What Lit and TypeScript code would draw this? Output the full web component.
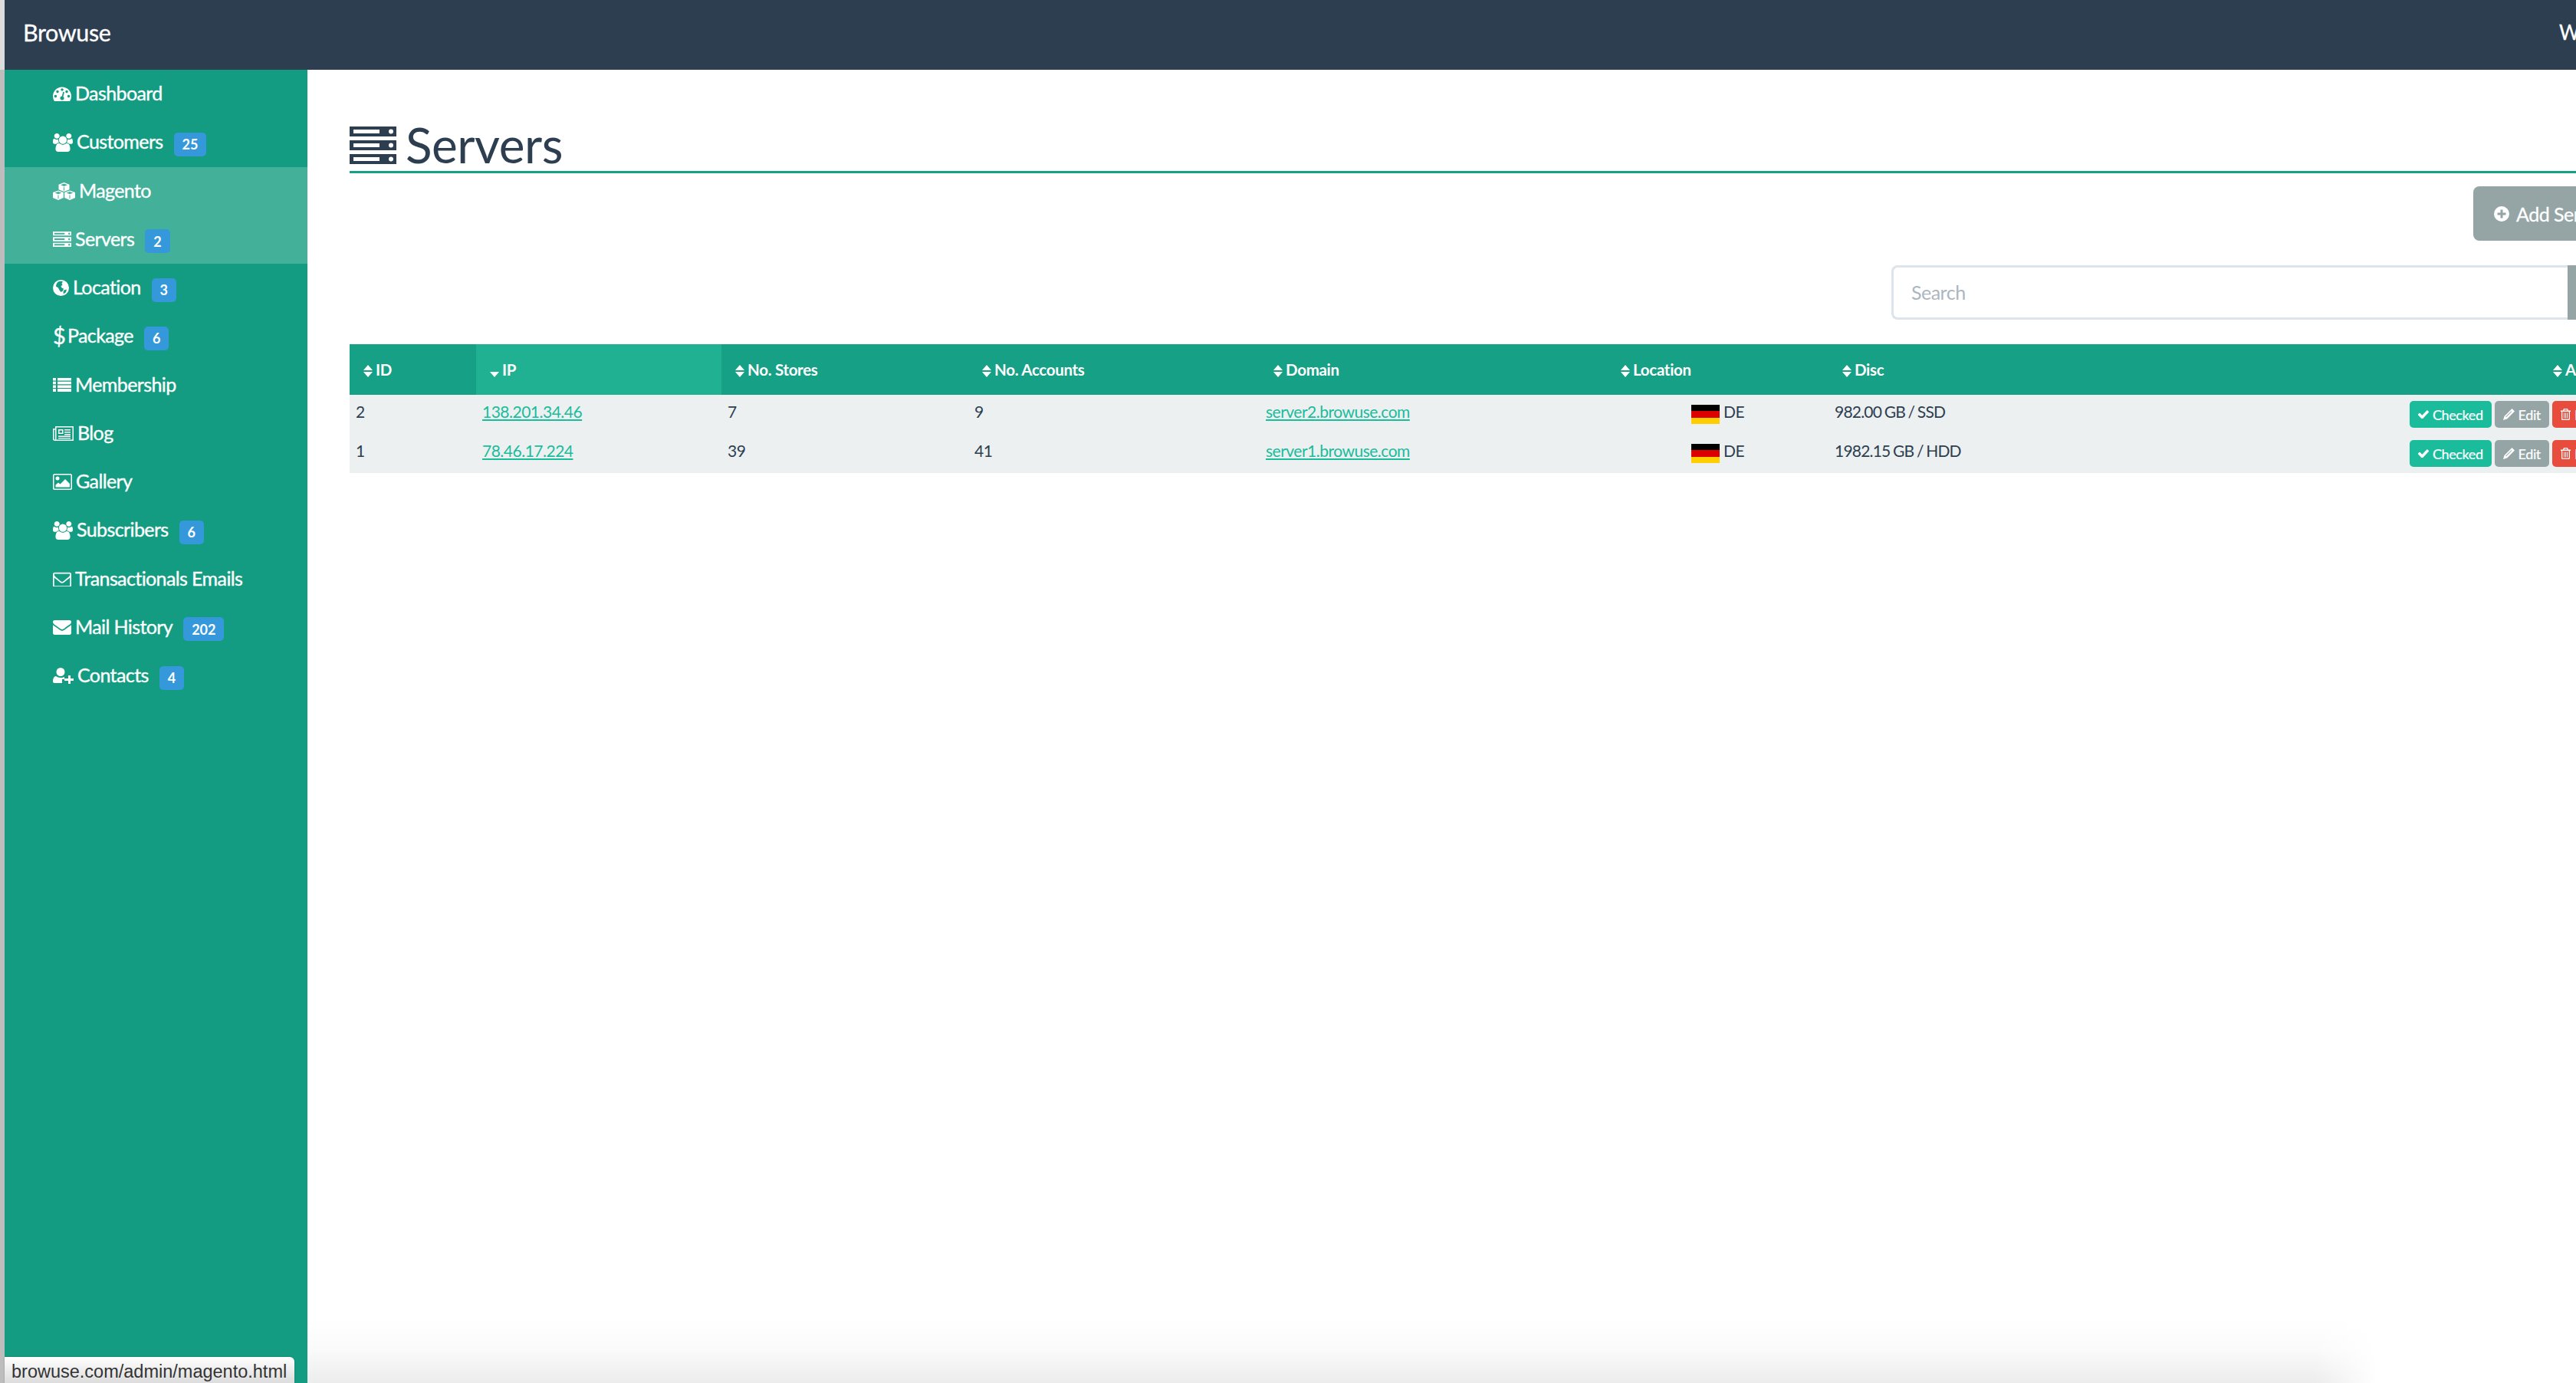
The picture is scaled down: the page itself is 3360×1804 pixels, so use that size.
import { LitElement, html, css } from "lit";
import { customElement } from "lit/decorators.js";

const P: Record<string, { vb: string; w: number; h: number; d: string }> = {
  dash: { vb: "0 220 1792 1420", w: 24, h: 19, d: "M384 1152q0-53-37.500-90.500t-90.500-37.500-90.500 37.500-37.500 90.500 37.500 90.500 90.500 37.500 90.500-37.500 37.500-90.500zm192-448q0-53-37.500-90.500t-90.500-37.500-90.500 37.500-37.500 90.500 37.500 90.500 90.500 37.500 90.500-37.500 37.500-90.500zm428 481l101-382q6-26-7.500-48.500t-38.500-29.500-48 6.500-30 39.500l-101 382q-60 5-107 43.500t-63 98.500q-20 77 20 146t117 89 146-20 89-117q16-60-6-117t-72-91zm660-33q0-53-37.500-90.500t-90.500-37.500-90.500 37.500-37.500 90.500 37.500 90.500 90.500 37.500 90.500-37.500 37.500-90.500zm-640-640q0-53-37.500-90.500t-90.500-37.500-90.500 37.500-37.500 90.500 37.500 90.500 90.500 37.500 90.500-37.500 37.500-90.500zm448 192q0-53-37.500-90.500t-90.500-37.500-90.500 37.500-37.500 90.500 37.500 90.500 90.500 37.500 90.500-37.500 37.500-90.500zm320 448q0 261-141 483-19 29-54 29h-1402q-35 0-54-29-141-221-141-483 0-182 71-348t191-286 286-191 348-71 348 71 286 191 191 286 71 348z" },
  users: { vb: "0 0 1920 1792", w: 26, h: 24, d: "M593 896q-162 5-265 128h-134q-82 0-138-40.500t-56-118.500q0-353 124-353 6 0 43.500 21t97.500 42.500 119 21.500q67 0 133-23-5 37-5 66 0 139 81 256zm1071 637q0 120-73 189.500t-194 69.500h-874q-121 0-194-69.500t-73-189.500q0-53 3.500-103.500t14-109 26.500-108.500 43-97.500 62-81 85.500-53.500 111.500-20q10 0 43 21.500t73 48 107 48 135 21.500 135-21.500 107-48 73-48 43-21.500q61 0 111.500 20t85.500 53.500 62 81 43 97.500 26.500 108.500 14 109 3.500 103.500zm-1024-1277q0 106-75 181t-181 75-181-75-75-181 75-181 181-75 181 75 75 181zm704 384q0 159-112.500 271.500t-271.500 112.500-271.500-112.500-112.500-271.500 112.500-271.500 271.500-112.500 271.500 112.500 112.500 271.500zm576 225q0 78-56 118.500t-138 40.500h-134q-103-123-265-128 81-117 81-256 0-29-5-66 66 23 133 23 59 0 119-21.500t97.500-42.500 43.500-21q124 0 124 353zm-128-609q0 106-75 181t-181 75-181-75-75-181 75-181 181-75 181 75 75 181z" },
  cubes: { vb: "0 0 29 23", w: 29, h: 23, d: "M14.500 0l7 2.800v6.400l-7 2.800-7-2.800V2.800zM14.500 1.400L10 3.200l4.500 1.800 4.500-1.800zM14 6.200v4.300h1V6.200zM7 10.500l6.800 2.600v6.900L7 23 0 20v-6.900zM7 11.900L2.600 13.600 7 15.300l4.400-1.700zM6.500 16.500v4.600h1v-4.600zM22 10.500l7 2.600v6.900l-7 3-6.800-3v-6.900zM22 11.900l-4.400 1.700 4.400 1.700 4.400-1.700zM21.500 16.500v4.600h1v-4.600z" },
  server: { vb: "0 0 61 49", w: 24, h: 20, d: "M0 0h61v13H0zM5 4v5h34V4zM51 6.500a3 3 0 1 0 6 0a3 3 0 1 0-6 0zM0 18h61v13H0zM5 22v5h34v-5zM51 24.500a3 3 0 1 0 6 0a3 3 0 1 0-6 0zM0 36h61v13H0zM5 40v5h34v-5zM51 42.500a3 3 0 1 0 6 0a3 3 0 1 0-6 0z" },
  globe: { vb: "0 0 21 21", w: 21, h: 21, d: "M10.500 0a10.500 10.500 0 1 0 0 21a10.500 10.500 0 1 0 0-21zM7 2.500c2-1 5-1 6 0l-1.500 2 1 2.500-2 1 1 2.500 2.500 1-1 3-2.500 1.500-2-2.500-1.500-3-3-2c0-2 1-4.500 3-6zM14.500 13.500l3.500-1-1 3.500-3 2.500-.5-2.500z" },
  list: { vb: "0 0 24 18", w: 24, h: 18, d: "M0 0h4v3.500H0zM6 0h18v3.500H6zM0 4.700h4v3.500H0zM6 4.700h18v3.500H6zM0 9.400h4v3.500H0zM6 9.400h18v3.500H6zM0 14.100h4V18H0zM6 14.100h18V18H6z" },
  news: { vb: "0 0 27 19", w: 27, h: 19, d: "M3 0h24v19H2.500C1 19 0 18 0 16.500V3h3zM4.500 1.500v15c0 .5-.4 1-1 1h22v-16zM1.500 4.500v12c0 .5.5 1 1 1s.5-.5.5-1v-12zM7 4h6.500v6H7zM8.500 5.500v3H12v-3zM15 4h8v1.500h-8zM15 7h8v1.500h-8zM15 10h8v1.500h-8zM7 12.500h16v1.500H7zM7 15h16v1.200H7z" },
  pic: { vb: "0 0 25 21", w: 25, h: 21, d: "M2 0h21c1 0 2 1 2 2v17c0 1-1 2-2 2H2c-1 0-2-1-2-2V2C0 1 1 0 2 0zM2 1.500c-.3 0-.5.2-.5.500v17c0 .3.2.5.5.5h21c.3 0 .5-.2.5-.5V2c0-.3-.2-.5-.5-.5zM6 3.500a2.500 2.500 0 1 1 0 5a2.500 2.500 0 1 1 0-5zM3.500 17.500v-3l3.500-3 2.500 2 6.500-6.500 6 6v4.500z" },
  envo: { vb: "0 192 1792 1408", w: 24, h: 19, d: "M1664 1504v-768q-32 36-69 66-268 206-426 338-51 43-83 67t-86.500 48.500-102.500 24.500h-2q-48 0-102.500-24.500t-86.500-48.500-83-67q-158-132-426-338-37-30-69-66v768q0 13 9.500 22.500t22.500 9.500h1472q13 0 22.500-9.500t9.500-22.500zm0-1051v-24.500l-.5-13-3-12.500-5.500-9-9-7.500-14-2.500h-1472q-13 0-22.500 9.500t-9.500 22.500q0 168 147 284 193 152 401 317 6 5 35 29.500t46 37.500 44.500 31.500 50.500 27.500 43 9h2q20 0 43-9t50.500-27.500 44.500-31.500 46-37.500 35-29.500q208-165 401-317 54-43 100.500-115.500t46.500-131.500zm128-37v1088q0 66-47 113t-113 47h-1472q-66 0-113-47t-47-113v-1088q0-66 47-113t113-47h1472q66 0 113 47t47 113z" },
  env: { vb: "0 256 1792 1408", w: 24, h: 19, d: "M1792 710v794q0 66-47 113t-113 47h-1472q-66 0-113-47t-47-113v-794q44 49 101 87 362 246 497 345 57 42 92.500 65.500t94.500 48 110 24.500h2q51 0 110-24.500t94.500-48 92.500-65.500q170-123 498-345 57-39 100-87zm0-294q0 79-49 151t-122 123q-376 261-468 325-10 7-42.500 30.500t-54 38-52 32.500-57.500 27-50 9h-2q-23 0-50-9t-57.500-27-52-32.500-54-38-42.500-30.500q-91-64-262-182.500t-205-142.500q-62-42-117-115.500t-55-136.500q0-78 41.500-130t118.500-52h1472q65 0 112.500 47t47.500 113z" },
  uplus: { vb: "0 0 27 21", w: 27, h: 21, d: "M10 0a5.500 5.500 0 1 1 0 11a5.500 5.500 0 1 1 0-11zM0 18c0-3.500 1-6.500 4-7 1.500 1.300 3.500 2 6 2s4-.5 5-1.300V15h-3v5H2c-1.200 0-2-.8-2-2zM20 10h3v4h4v3h-4v4h-3v-4h-5v-3h5z" },
  plus: { vb: "0 0 20 20", w: 20, h: 20, d: "M10 0a10 10 0 1 0 0 20a10 10 0 1 0 0-20zM8.500 4.500h3V8.500h4v3h-4v4h-3v-4h-4v-3h4z" },
  check: { vb: "128 320 1543 1130", w: 14, h: 11, d: "M1671 566q0 40-28 68l-724 724-136 136q-28 28-68 28t-68-28l-136-136-362-362q-28-28-28-68t28-68l136-136q28-28 68-28t68 28l294 295 656-657q28-28 68-28t68 28l136 136q28 28 28 68z" },
  pencil: { vb: "0 0 15 15", w: 15, h: 15, d: "M11.500 0L15 3.500 5 13.500 0 15 1.500 10zM10.700 3.200L3.300 10.600l.6.600 7.400-7.400z" },
  trash: { vb: "0 0 13 15", w: 13, h: 15, d: "M4 0h5l1 2.500h3v1.500h-1v9.500c0 .8-.7 1.500-1.500 1.500h-8C1.700 15 1 14.300 1 13.500V4H0V2.500h3zM4.800 1.200l-.4 1.300h4.200l-.4-1.300zM2.300 4v9.500c0 .2 0 .3.2.3h8c.2 0 .2-.1.200-.3V4zM4 5.500h1v7H4zM6 5.500h1v7H6zM8 5.500h1v7H8z" },
  sort: { vb: "0 0 12 16", w: 12, h: 16, d: "M0 7L6 0l6 7zM0 9h12l-6 7z" },
  sortd: { vb: "0 0 12 16", w: 12, h: 16, d: "M0 9h12l-6 7z" },
};

function icon(name: string) {
  const p = P[name];
  return html`<svg class="ic" viewBox=${p.vb} width=${p.w} height=${p.h} preserveAspectRatio="none" aria-hidden="true"><path fill="currentColor" fill-rule="evenodd" d=${p.d}></path></svg>`;
}

const MENU: { ic: string; label: string; badge?: string; active?: boolean }[] = [
  { ic: "dash", label: "Dashboard" },
  { ic: "users", label: "Customers", badge: "25" },
  { ic: "cubes", label: "Magento", active: true },
  { ic: "server", label: "Servers", badge: "2", active: true },
  { ic: "globe", label: "Location", badge: "3" },
  { ic: "$", label: "Package", badge: "6" },
  { ic: "list", label: "Membership" },
  { ic: "news", label: "Blog" },
  { ic: "pic", label: "Gallery" },
  { ic: "users", label: "Subscribers", badge: "6" },
  { ic: "envo", label: "Transactionals Emails" },
  { ic: "env", label: "Mail History", badge: "202" },
  { ic: "uplus", label: "Contacts", badge: "4" },
];

const HEAD = ["ID", "IP", "No. Stores", "No. Accounts", "Domain", "Location", "Disc", "Actions"];
const ROWS = [
  ["2", "138.201.34.46", "7", "9", "server2.browuse.com", "982.00 GB / SSD"],
  ["1", "78.46.17.224", "39", "41", "server1.browuse.com", "1982.15 GB / HDD"],
];

@customElement("app-root")
export class AppRoot extends LitElement {
  static styles = css`
    :host { display: flex; position: relative; width: 3360px; height: 1804px; overflow: hidden; background: #fff; font-family: Lato, "Liberation Sans", sans-serif; color: #2c3e50; }
    .strip { width: 6px; flex: none; background: linear-gradient(#dcdcdc 0, #dcdcdc 91px, #bdbdbd 91px); }
    .col { flex: 1; min-width: 0; display: flex; flex-direction: column; }
    .nav { height: 91px; flex: none; background: #2c3e50; color: #fff; display: flex; align-items: center; justify-content: space-between; padding-left: 24px; font-size: 30.5px; letter-spacing: -0.4px; padding-bottom: 7px; box-sizing: border-box; overflow: hidden; -webkit-text-stroke: 0.3px #fff; }
    .nav .wel { font-size: 26px; margin-right: -20px; width: 42px; overflow: hidden; white-space: nowrap; }
    .body { flex: 1; display: flex; min-height: 0; }
    .side { width: 395px; flex: none; background: #149c82; color: #fff; }
    .item { height: 63.25px; box-sizing: border-box; display: flex; align-items: center; padding: 0 0 3px 63px; font-size: 25px; letter-spacing: -0.6px; white-space: nowrap; -webkit-text-stroke: 0.35px #fff; }
    .item.on { background: #43b099; }
    .item .ic, .item .dollar { margin-right: 5px; flex: none; }
    .item .ic { margin-top: 3px; }
    .dollar { font-size: 29px; width: 14px; display: inline-block; }
    .badge { background: #3498db; border-radius: 5px; font-size: 18px; font-weight: 700; letter-spacing: 0; height: 31px; min-width: 31px; padding: 0 11px; box-sizing: border-box; display: inline-flex; align-items: center; justify-content: center; margin-left: 14px; margin-top: 8px; -webkit-text-stroke: 0; }
    .main { flex: 1; min-width: 0; overflow: hidden; padding-left: 55px; }
    .content { width: 3284px; }
    h1 { margin: 0; height: 135px; box-sizing: border-box; border-bottom: 3px solid #16a085; display: flex; align-items: flex-end; padding-bottom: 2px; font-weight: 400; font-size: 64px; line-height: 64px; letter-spacing: -0.5px; }
    h1 .ic { width: 61px; height: 49px; margin-right: 12px; margin-bottom: 7px; }
    .add { margin: 17px 0 0 2770px; height: 71px; width: 214px; box-sizing: border-box; border-radius: 8px; background: #95a5a6; color: #fff; display: flex; align-items: center; gap: 9px; padding-left: 27px; font-size: 25px; letter-spacing: -0.5px; white-space: nowrap; -webkit-text-stroke: 0.3px #fff; }
    .search { margin: 32px 0 0 2011px; display: flex; height: 71px; }
    .input { width: 882px; box-sizing: border-box; border: 3px solid #dce4ec; border-right: 0; border-radius: 8px 0 0 8px; background: #fff; color: #acb6c0; font-size: 25px; letter-spacing: -0.5px; display: flex; align-items: center; padding: 0 0 2px 23px; }
    .sbtn { width: 100px; background: #95a5a6; }
    table { margin-top: 32px; width: 3284px; table-layout: fixed; border-collapse: collapse; }
    th { height: 66px; padding: 0 0 0 18px; background: #16a085; color: #fff; font-size: 20.5px; font-weight: 700; letter-spacing: -0.3px; text-align: left; white-space: nowrap; }
    th.sorted { background: #20b192; }
    th .ic { margin-right: 4px; vertical-align: -2px; }
    th.act { padding-left: 195px; }
    td { height: 51px; padding: 7px 8px 0; box-sizing: border-box; background: #ecf0f1; font-size: 21px; line-height: 30px; letter-spacing: -0.5px; vertical-align: top; white-space: nowrap; }
    td.loc { text-align: center; }
    td.disc { word-spacing: -1px; letter-spacing: -0.8px; }
    a { color: #1abc9c; text-decoration: underline; }
    .flag { display: inline-flex; flex-direction: column; width: 37px; height: 25px; vertical-align: top; margin: 6px 5px 0 0; }
    .flag i { flex: 1; }
    .btns { display: flex; gap: 4px; margin-top: 1px; }
    .btn { height: 35px; box-sizing: border-box; border-radius: 5px; color: #fff; display: flex; align-items: center; gap: 5px; padding: 0 11px; font-size: 18px; letter-spacing: -0.4px; -webkit-text-stroke: 0.2px #fff; }
    .g { background: #1abc9c; } .e { background: #95a5a6; } .r { background: #e74c3c; }
    .status { position: absolute; left: 6px; bottom: 0; width: 378px; height: 34px; box-sizing: border-box; padding-left: 9px; border-radius: 0 6px 0 0; background: linear-gradient(#fff, #dcdcdc); box-shadow: 0 0 2px rgba(0,0,0,.3); font-family: "Liberation Sans", sans-serif; font-size: 23.5px; line-height: 38px; color: #333; white-space: nowrap; }
    .fade { position: absolute; left: 401px; bottom: 0; width: 2700px; height: 84px; background: linear-gradient(rgba(0,0,0,0), rgba(0,0,0,.02) 50%, rgba(0,0,0,.075)); -webkit-mask-image: linear-gradient(to right, #000 97%, transparent); mask-image: linear-gradient(to right, #000 97%, transparent); pointer-events: none; }
  `;

  render() {
    return html`
      <div class="strip"></div>
      <div class="col">
        <div class="nav"><span>Browuse</span><span class="wel">Welcome</span></div>
        <div class="body">
          <div class="side">
            ${MENU.map((m) => html`<div class="item ${m.active ? "on" : ""}">
              ${m.ic === "$" ? html`<span class="dollar">$</span>` : icon(m.ic)}
              <span>${m.label}</span>
              ${m.badge ? html`<span class="badge">${m.badge}</span>` : ""}
            </div>`)}
          </div>
          <div class="main">
            <div class="content">
              <h1>${icon("server")}<span>Servers</span></h1>
              <div class="add">${icon("plus")}<span>Add Server</span></div>
              <div class="search"><div class="input">Search</div><div class="sbtn"></div></div>
              <table>
                <colgroup>
                  ${[165, 320, 322, 380, 453, 289, 750, 605].map((w) => html`<col style="width:${w}px" />`)}
                </colgroup>
                <thead><tr>
                  ${HEAD.map((h, i) => html`<th class="${i === 1 ? "sorted" : ""} ${i === 7 ? "act" : ""}">${icon(i === 1 ? "sortd" : "sort")}${h}</th>`)}
                </tr></thead>
                <tbody>
                  ${ROWS.map((r) => html`<tr>
                    <td>${r[0]}</td>
                    <td><a>${r[1]}</a></td>
                    <td>${r[2]}</td>
                    <td>${r[3]}</td>
                    <td><a>${r[4]}</a></td>
                    <td class="loc"><span class="flag"><i style="background:#000"></i><i style="background:#d00"></i><i style="background:#ffce00"></i></span>DE</td>
                    <td class="disc">${r[5]}</td>
                    <td><div class="btns">
                      <span class="btn g">${icon("check")}Checked</span>
                      <span class="btn e">${icon("pencil")}Edit</span>
                      <span class="btn r">${icon("trash")}Delete</span>
                    </div></td>
                  </tr>`)}
                </tbody>
              </table>
            </div>
          </div>
        </div>
      </div>
      <div class="fade"></div>
      <div class="status">browuse.com/admin/magento.html</div>
    `;
  }
}
